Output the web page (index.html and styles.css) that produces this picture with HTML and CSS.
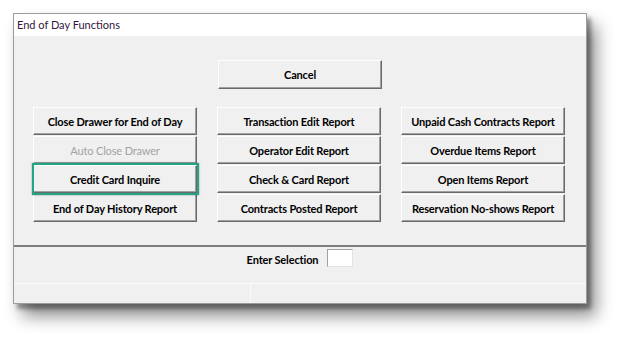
FILE: index.html
```html
<!DOCTYPE html>
<html lang="en">
<head>
    <meta charset="UTF-8">
    <title>End of Day Functions</title>
    <link rel="stylesheet" href="styles.css">
</head>
<body>

    <div class="window">
        <!-- Title -->
        <div class="titlebar">End of Day Functions</div>

        <!-- Function Buttons -->
        <div class="main">
            <div class="cancel-row">
                <button class="btn btn-cancel">Cancel</button>
            </div>

            <div class="grid">
                <button class="btn">Close Drawer for End of Day</button>
                <button class="btn">Transaction Edit Report</button>
                <button class="btn">Unpaid Cash Contracts Report</button>

                <button class="btn" disabled>Auto Close Drawer</button>
                <button class="btn">Operator Edit Report</button>
                <button class="btn">Overdue Items Report</button>

                <button class="btn highlight">Credit Card Inquire</button>
                <button class="btn">Check &amp; Card Report</button>
                <button class="btn">Open Items Report</button>

                <button class="btn">End of Day History Report</button>
                <button class="btn">Contracts Posted Report</button>
                <button class="btn">Reservation No-shows Report</button>
            </div>
        </div>

        <!-- Selection -->
        <div class="selection">
            <label for="sel">Enter Selection</label>
            <input type="text" id="sel">
        </div>

        <!-- Status Bar -->
        <div class="statusbar">
            <div class="panel panel-left"></div>
            <div class="panel"></div>
        </div>
    </div>

</body>
</html>
```

FILE: styles.css
```css
/* General Page Styling */
body {
    margin: 0;
    padding: 13px 0 0 13px;
    min-height: 320px;
    background: white;
    font-family: Lato, "Open Sans", sans-serif;
}

/* Window */
.window {
    width: 572px;
    border: 1px solid #9c9c9c;
    background-color: #f0f0f0;
    box-shadow: 4px 5px 4px rgba(0, 0, 0, 0.35), 9px 12px 16px rgba(0, 0, 0, 0.45);
}

.titlebar {
    height: 22px;
    line-height: 21px;
    padding-left: 3px;
    background: white;
    color: #33163f;
    font-size: 11px;
}

/* Buttons */
.main {
    height: 185px;
    padding: 24px 0 0 19px;
    border-bottom: 2px solid #7d7d7d;
}

.cancel-row {
    padding-left: 185px;
    margin-bottom: 18px;
}

.grid {
    display: grid;
    grid-template-columns: 164px 164px 164px;
    grid-auto-rows: 28px;
    column-gap: 20px;
    row-gap: 1px;
}

.btn {
    padding: 0;
    margin: 0;
    font-family: inherit;
    font-size: 11px;
    font-weight: 700;
    letter-spacing: -0.15px;
    color: black;
    background-color: #f0f0f0;
    border: 1px solid;
    border-color: #ffffff #6a6a6a #6a6a6a #ffffff;
    box-shadow: inset -1px -1px 0 #a0a0a0;
}

.btn:disabled {
    color: #a3a3a3;
    font-weight: 400;
}

.btn-cancel {
    width: 164px;
    height: 29px;
}

.highlight {
    position: relative;
}

.highlight::after {
    content: "";
    position: absolute;
    top: -3px;
    left: -2px;
    right: -3px;
    bottom: -3px;
    border: 2px solid #23a585;
    box-shadow: 0 0 2px rgba(0, 0, 0, 0.35);
}

/* Enter Selection */
.selection {
    height: 36px;
    display: flex;
    justify-content: center;
    align-items: flex-start;
    gap: 9px;
    padding-top: 2px;
    box-sizing: border-box;
    font-size: 11px;
    font-weight: 700;
    letter-spacing: -0.15px;
}

.selection label {
    margin-top: 4px;
}

.selection input {
    width: 24px;
    height: 16px;
    padding: 0;
    border: 1px solid;
    border-color: #a0a0a0 #e3e3e3 #e3e3e3 #a0a0a0;
    background: white;
}

/* Status Bar */
.statusbar {
    display: flex;
    height: 19px;
    border-top: 1px solid #fbfbfb;
}

.panel {
    flex: 1;
}

.panel-left {
    flex: 0 0 236px;
    border-right: 1px solid #fbfbfb;
}
```
